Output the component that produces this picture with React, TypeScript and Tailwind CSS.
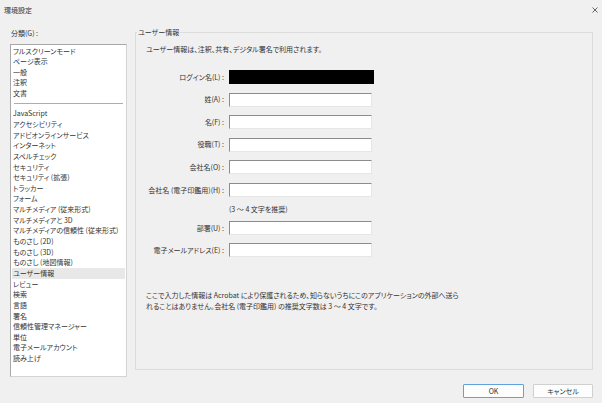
import React from "react";

const topItems = ["フルスクリーンモード", "ページ表示", "一般", "注釈", "文書"];
const restItems = [
  "JavaScript",
  "アクセシビリティ",
  "アドビオンラインサービス",
  "インターネット",
  "スペルチェック",
  "セキュリティ",
  "セキュリティ (拡張)",
  "トラッカー",
  "フォーム",
  "マルチメディア (従来形式)",
  "マルチメディアと 3D",
  "マルチメディアの信頼性 (従来形式)",
  "ものさし (2D)",
  "ものさし (3D)",
  "ものさし (地図情報)",
  "ユーザー情報",
  "レビュー",
  "検索",
  "言語",
  "署名",
  "信頼性管理マネージャー",
  "単位",
  "電子メールアカウント",
  "読み上げ",
];

function Field({ label, filled }: { label: string; filled?: boolean }) {
  return (
    <div className="flex items-center h-[14px]">
      <div className="w-[88px] text-right whitespace-nowrap">{label}</div>
      {filled ? (
        <div className="ml-[5px] w-[145px] h-[14px] bg-black" />
      ) : (
        <div className="ml-[5px] w-[143px] h-[14px] bg-white border-t border-l border-[#8c8c8c] border-r-[#e6e6e6] border-b-[#e6e6e6] border-r border-b" />
      )}
    </div>
  );
}

export default function App() {
  return (
    <div className="w-[602px] h-[403px] bg-[#f0f0f0] flex flex-col overflow-hidden font-['Noto_Sans_CJK_JP','Noto_Sans',sans-serif] [font-feature-settings:'palt'] text-[7px] leading-[10.6px] text-[#333]">
      {/* title bar */}
      <div className="h-[20px] shrink-0 flex items-center justify-between pl-[4px] pr-[4px]">
        <span className="leading-[11px]">環境設定</span>
        <svg width="6" height="6" viewBox="0 0 6 6" className="text-[#444]">
          <path d="M0.5 0.5 L5.5 5.5 M5.5 0.5 L0.5 5.5" stroke="currentColor" strokeWidth="0.8" fill="none" />
        </svg>
      </div>

      {/* main */}
      <div className="h-[357px] shrink-0 flex">
        {/* left column */}
        <div className="w-[127px] pl-[10px] flex flex-col">
          <div className="mt-[8px] h-[11px] leading-[11px] pl-[1px]">分類(G) :</div>
          <div className="mt-[5px] flex-1 bg-white border border-[#a8a8a8] border-r-[#d4d4d4] border-b-[#d4d4d4] pt-[1px] px-[1px]">
            {topItems.map((t) => (
              <div key={t} className="pl-[1px] h-[10.4px] leading-[10.4px] whitespace-nowrap">
                {t}
              </div>
            ))}
            <div className="h-[10.4px] flex items-center px-[2px]">
              <div className="h-px w-full bg-[#82b8e8]" />
            </div>
            {restItems.map((t) => (
              <div
                key={t}
                className={
                  t === "ユーザー情報"
                    ? "pl-[1px] h-[10.65px] leading-[10.65px] whitespace-nowrap bg-[#e8e8e8]"
                    : "pl-[1px] h-[10.65px] leading-[10.65px] whitespace-nowrap"
                }
              >
                {t}
              </div>
            ))}
          </div>
        </div>

        {/* group box */}
        <div className="relative ml-[8px] mt-[12px] w-[458px] h-[338px] border border-[#dcdcdc] flex flex-col pl-[10px]">
          <div className="absolute left-[1px] top-[-6px] px-[1px] bg-[#f0f0f0] leading-[11px]">ユーザー情報</div>
          <div className="mt-[10.5px] leading-[11px] whitespace-nowrap">
            ユーザー情報は、注釈、共有、デジタル署名で利用されます。
          </div>
          <div className="-ml-[10px] mt-[15.5px] flex flex-col gap-[8.6px]">
            <Field label="ログイン名(L) :" filled />
            <Field label="姓(A) :" />
            <Field label="名(F) :" />
            <Field label="役職(T) :" />
            <Field label="会社名(O) :" />
            <Field label="会社名 (電子印鑑用)(H) :" />
          </div>
          <div className="ml-[83px] mt-[7px] h-[11px] leading-[11px] whitespace-nowrap">(3 ～ 4 文字を推奨)</div>
          <div className="-ml-[10px] mt-[6px] flex flex-col gap-[8px]">
            <Field label="部署(U) :" />
            <Field label="電子メールアドレス(E) :" />
          </div>
          <div className="mt-[33.5px] leading-[10.5px] whitespace-nowrap">
            ここで入力した情報は Acrobat により保護されるため、知らないうちにこのアプリケーションの外部へ送ら
            <br />
            れることはありません。会社名 (電子印鑑用) の推奨文字数は 3 ～ 4 文字です。
          </div>
        </div>
      </div>

      {/* footer */}
      <div className="flex justify-end gap-[9px] pr-[9px] mt-[7px]">
        <div className="w-[61px] h-[14px] flex items-center justify-center bg-[#fdfdfd] border border-[#5fa2dd] rounded-[1px] leading-[12px]">
          OK
        </div>
        <div className="w-[60px] h-[14px] flex items-center justify-center bg-[#fdfdfd] border border-[#d0d0d0] rounded-[1px] leading-[12px]">
          キャンセル
        </div>
      </div>
    </div>
  );
}
